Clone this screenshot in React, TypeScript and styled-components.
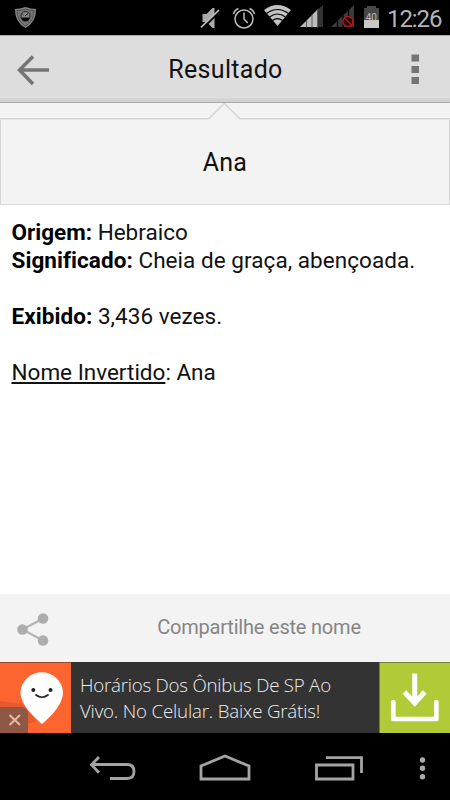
import React from "react";
import styled, { createGlobalStyle } from "styled-components";

const GlobalStyle = createGlobalStyle`
  * { box-sizing: border-box; }
  html, body { margin: 0; padding: 0; background: #fff; }
  body { font-family: Roboto, "Liberation Sans", sans-serif; }
  svg { display: block; }
`;

const Screen = styled.div`
  width: 450px;
  height: 800px;
  display: flex;
  flex-direction: column;
  overflow: hidden;
  background: #fff;
`;

const StatusBar = styled.div`
  height: 35px;
  flex: none;
  display: flex;
  justify-content: space-between;
  background: #000;
`;

const StatusRight = styled.div`
  display: flex;
`;

const Clock = styled.span`
  width: 63px;
  font-size: 24px;
  line-height: 38px;
  letter-spacing: -1.1px;
  font-weight: 400;
  color: #b4b4b4;
  white-space: nowrap;
`;

const Header = styled.header`
  height: 68px;
  flex: none;
  display: grid;
  grid-template-columns: 80px 1fr 80px;
  border-top: 1px solid #aaa;
  border-bottom: 1px solid #a9a9a9;
  background: linear-gradient(#ddd 0 62px, #d2d2d2 63px);
`;

const Title = styled.h1`
  margin: 0;
  padding-left: 1px;
  text-align: center;
  font-size: 25px;
  line-height: 67px;
  font-weight: 400;
  letter-spacing: 0.3px;
  color: #111;
`;

const NamePanel = styled.section`
  height: 102px;
  flex: none;
  background: #f3f3f3;
  border-bottom: 1px solid #d8d8d8;
`;

const NameCard = styled.div`
  height: 84px;
  border: solid #d5d5d5;
  border-width: 0 1px;
  text-align: center;
  font-size: 25px;
  line-height: 85px;
  letter-spacing: 0.2px;
  color: #111;
`;

const Details = styled.main`
  flex: 1;
  padding: 13px 11.5px;
  font-size: 22.5px;
  line-height: 28.1px;
  color: #111;
`;

const Line = styled.p<{ $spacing?: number; $gap?: boolean }>`
  margin: 0 0 ${(p) => (p.$gap ? 28 : 0)}px;
  letter-spacing: ${(p) => p.$spacing ?? 0}px;
  white-space: nowrap;
`;

const Label = styled.b`
  font-weight: 700;
  color: #000;
`;

const Underlined = styled.span`
  text-decoration: underline;
  text-decoration-thickness: 1.5px;
  text-underline-offset: 2px;
`;

const ShareBar = styled.div`
  height: 68px;
  flex: none;
  display: flex;
  background: #f3f3f3;
`;

const ShareText = styled.span`
  flex: 1;
  text-align: center;
  font-size: 20px;
  line-height: 67px;
  letter-spacing: -0.2px;
  color: #858585;
`;

const AdBanner = styled.div`
  height: 71px;
  flex: none;
  display: grid;
  grid-template-columns: 71px 1fr 71px;
  background: #333;
`;

const AdCopy = styled.div`
  padding: 10px 0 0 9px;
  font-family: "Open Sans", sans-serif;
  font-weight: 300;
  font-size: 18.7px;
  line-height: 26px;
  color: #eee;
  white-space: nowrap;
`;

const AdLine = styled.div<{ $spacing: number }>`
  letter-spacing: ${(p) => p.$spacing}px;
`;

const NavBar = styled.nav`
  height: 67px;
  flex: none;
  background: #000;
`;

const ShieldIcon = () => (
  <svg width="50" height="35" viewBox="0 0 50 35">
    <path d="M15 9 Q20 9 25.500 7 Q31 9 36 9 Q36.500 22 25.500 28 Q14.500 22 15 9Z" fill="#858585" />
    <path d="M17 10.500 Q21 10.500 25.500 9 Q30 10.500 34 10.500 Q34 21 25.500 26 Q17 21 17 10.500Z" fill="#747474" stroke="#3d3d3d" strokeWidth=".7" />
    <circle cx="25.500" cy="16" r="4.500" fill="#888" stroke="#222" />
    <path d="M21.500 17.500h8a4 4 0 0 1-8 0Z" fill="#080808" />
    <path d="m25 16 3-2.500M22.500 14.500l1 .7" stroke="#111" />
  </svg>
);

const StatusIcons = () => (
  <svg width="190" height="35" viewBox="197 0 190 35" fill="none">
    <path d="M202.500 14h4l6-6h2v20h-2l-6-6h-4Z" fill="#aaa" />
    <path d="m202 29 18-18" stroke="#000" strokeWidth="2" />
    <path d="m201 27.300 18-17.300" stroke="#bbb" strokeWidth="1.700" />
    <g stroke="#bdbdbd" strokeWidth="1.500">
      <circle cx="244" cy="19" r="9" />
      <path d="M244 12.500V19l3.800 4M233.500 14q1-4 5-5.500M249.500 8.500q4 1.500 5 5.500" />
    </g>
    <path d="M264 10q13.500-10 27 0L277.500 26Z" fill="#c2c2c2" />
    <g stroke="#000" strokeWidth="1.200">
      <path d="M266.500 13.500q11-8 22 0M269.500 17q8-6 16 0M272.500 20.500q5-3.700 10 0" />
    </g>
    <path d="M300 27 318 9v18Z" fill="#bbb" />
    <path d="M318 9l5-4v22h-5Z" fill="#333" />
    <path d="M306.500 20v8M312 14v14M317.500 9v19" stroke="#444" strokeWidth=".8" />
    <path d="M331 27 354 5v22Z" fill="#3b3b3b" />
    <path d="M337.500 19v9M343 13v15M348.500 8v20" stroke="#000" strokeWidth="1.300" />
    <circle cx="348" cy="21.500" r="5" fill="#210606" stroke="#ad1717" strokeWidth="1.600" />
    <path d="m344.500 18 7 7" stroke="#ad1717" strokeWidth="1.600" />
    <path d="M364 8h3V6h9v2h3v20h-15Z" fill="#484848" />
    <path d="M364 20h15v8h-15Z" fill="#c8c8c8" />
    <text x="371.300" y="20.500" textAnchor="middle" fontFamily="Roboto" fontSize="10" fill="#bbb">40</text>
  </svg>
);

const BackIcon = () => (
  <svg width="80" height="66" viewBox="0 36 80 66">
    <path d="M49 70H20M33 56.500 19.500 70 33 84" fill="none" stroke="#757575" strokeWidth="3.500" />
  </svg>
);

const OverflowIcon = () => (
  <svg width="80" height="66" viewBox="370 36 80 66">
    <path d="M411.500 54.500h7.500v7h-7.500ZM411.500 66h7.500v7h-7.500ZM411.500 77h7.500v7h-7.500Z" fill="#757575" />
  </svg>
);

const NotchRule = () => (
  <svg width="450" height="17" viewBox="0 103 450 17">
    <path d="M0 118.800H209L224.300 103.500 240 118.800H450" fill="none" stroke="#d5d5d5" strokeWidth="1.500" />
  </svg>
);

const ShareIcon = () => (
  <svg width="68" height="68" viewBox="0 594 68 68">
    <path d="m43 618.500-20.500 11L43 640.500" fill="none" stroke="#b4b4b4" strokeWidth="2.300" />
    <g fill="#adadad">
      <circle cx="43" cy="618.500" r="5.300" />
      <circle cx="22.500" cy="629.500" r="5.300" />
      <circle cx="43" cy="640.500" r="5.300" />
    </g>
  </svg>
);

const PinLogo = () => (
  <svg width="71" height="71" viewBox="0 662 71 71">
    <path d="M0 662.500h71V733H0Z" fill="#fc6430" />
    <path d="m0 701 22 3 15 17-9 3L0 707Z" fill="#e75a2d" />
    <path d="M42 724C34 717 20.500 705 20.500 692A21.300 21.300 0 0 1 63 692C63 705 50 717 42 724Z" fill="#fff" />
    <circle cx="33.300" cy="690" r="2" fill="#222" />
    <circle cx="50.500" cy="690" r="2" fill="#222" />
    <path d="M36 695q6 4.500 12 0" fill="none" stroke="#222" strokeWidth="1.700" strokeLinecap="round" />
    <path d="M0 707h21q7 0 7 7v19H0Z" fill="#8f5844" />
    <path d="m9.500 715 10.500 10M20 715 9.500 725" stroke="#e4b9a8" strokeWidth="2" />
  </svg>
);

const DownloadIcon = () => (
  <svg width="71" height="71" viewBox="379 662 71 71">
    <path d="M379.500 662.500H450V733h-70.500Z" fill="#b1cb38" />
    <path d="M393.300 702v17h43v-17" fill="none" stroke="#fff" strokeWidth="4.700" strokeLinecap="round" strokeLinejoin="round" />
    <path d="M414.700 673.500v28M404.500 692l10.200 11 10-11" fill="none" stroke="#fff" strokeWidth="5" />
  </svg>
);

const NavIcons = () => (
  <svg width="450" height="67" viewBox="0 733 450 67" fill="none" stroke="#a4a4a4" strokeWidth="2.800">
    <path d="M92 764.500h35q7 0 7 7t-7 7h-17M99 757l-7.500 7.700 7.500 8" />
    <path d="M201 779v-13l24-10 24 10v13Z" />
    <path d="M316.500 765H353v14h-36.500ZM326 757.700h35.500V773" />
    <g fill="#aaa" stroke="none">
      <circle cx="422.500" cy="760" r="2.700" />
      <circle cx="422.500" cy="768.300" r="2.700" />
      <circle cx="422.500" cy="776.700" r="2.700" />
    </g>
  </svg>
);

export default function App() {
  return (
    <>
      <GlobalStyle />
      <Screen>
        <StatusBar>
          <ShieldIcon />
          <StatusRight>
            <StatusIcons />
            <Clock>12:26</Clock>
          </StatusRight>
        </StatusBar>
        <Header>
          <BackIcon />
          <Title>Resultado</Title>
          <OverflowIcon />
        </Header>
        <NamePanel>
          <NotchRule />
          <NameCard>Ana</NameCard>
        </NamePanel>
        <Details>
          <Line><Label>Origem:</Label> Hebraico</Line>
          <Line $gap $spacing={0.05}><Label>Significado:</Label> Cheia de graça, abençoada.</Line>
          <Line $gap $spacing={0.05}><Label>Exibido:</Label> 3,436 vezes.</Line>
          <Line><Underlined>Nome Invertido</Underlined>: Ana</Line>
        </Details>
        <ShareBar>
          <ShareIcon />
          <ShareText>Compartilhe este nome</ShareText>
        </ShareBar>
        <AdBanner>
          <PinLogo />
          <AdCopy>
            <AdLine $spacing={-0.22}>Horários Dos Ônibus De SP Ao</AdLine>
            <AdLine $spacing={-0.18}>Vivo. No Celular. Baixe Grátis!</AdLine>
          </AdCopy>
          <DownloadIcon />
        </AdBanner>
        <NavBar><NavIcons /></NavBar>
      </Screen>
    </>
  );
}
